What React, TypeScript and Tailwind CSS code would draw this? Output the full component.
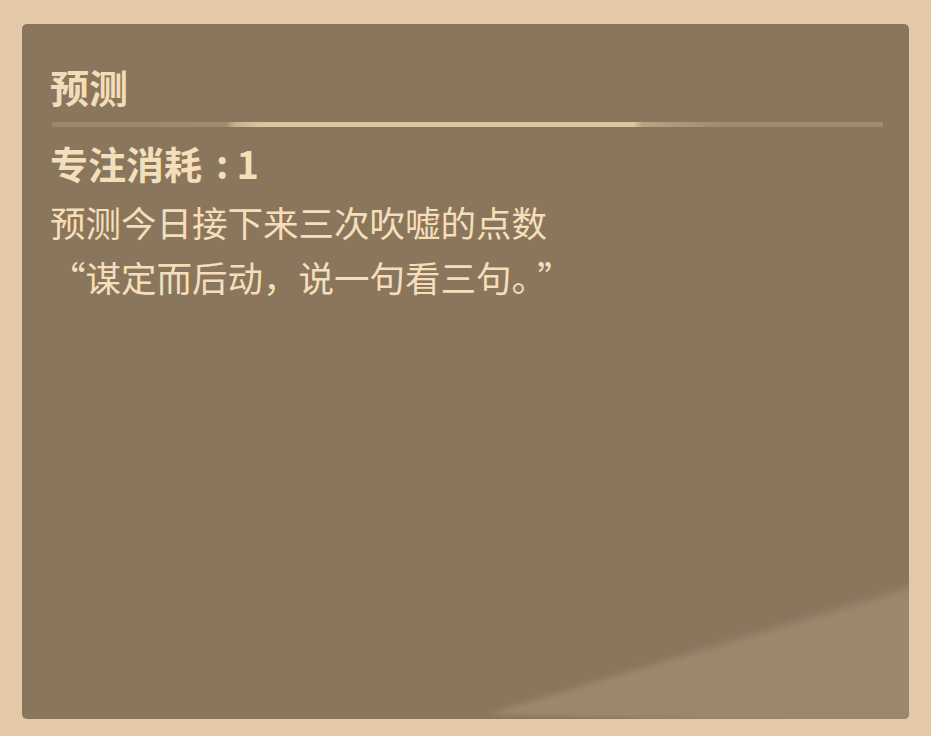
export default function App() {
  const cn = { fontFamily: '"Noto Sans CJK SC", "Noto Sans", sans-serif' };
  return (
    <div className="w-[931px] h-[736px] bg-[#e3c9a7] pt-[24px] pl-[22px]" style={cn}>
      <div className="relative w-[887px] h-[695px] rounded-[5px] bg-[#8a765c] overflow-hidden">
        {/* lighter wedge in bottom-right */}
        <svg className="absolute inset-0 pointer-events-none" width="887" height="695" viewBox="0 0 887 695">
          <defs>
            <filter id="soft">
              <feGaussianBlur stdDeviation="2.5" />
            </filter>
          </defs>
          <polygon points="462,690 890,558 890,700" fill="#93806a" filter="url(#soft)" opacity="0.7" />
          <polygon points="470,690 890,566 890,700" fill="#9c876c" filter="url(#soft)" />
        </svg>

        <div className="relative pt-[42px] pl-[28px] pr-[26px]">
          <div className="text-[39px] leading-[40px] font-bold text-[#f2ddb6]">预测</div>
          <div className="mt-[16px] ml-[2px] h-[5px] bg-[linear-gradient(90deg,#9a866c_0%,#a08b70_21%,#c4b08e_22%,#d8c6a0_25%,#dac8a2_70%,#b8a485_71%,#a08c72_80%,#9e8a70_100%)]" />
          <div className="mt-[16px] text-[38px] leading-[40px] font-bold text-[#f4dfba]">
            专注消耗<span className="ml-[14px]">:</span><span className="ml-[8px]">1</span>
          </div>
          <div className="mt-[11px] text-[35.5px] leading-[55px] text-[#f4dfba]">预测今日接下来三次吹嘘的点数</div>
          <div className="text-[35.5px] leading-[55px] text-[#f4dfba]">
            “谋定而后动，说一句看三句。<span className="ml-[8px]">”</span>
          </div>
        </div>
      </div>
    </div>
  );
}
